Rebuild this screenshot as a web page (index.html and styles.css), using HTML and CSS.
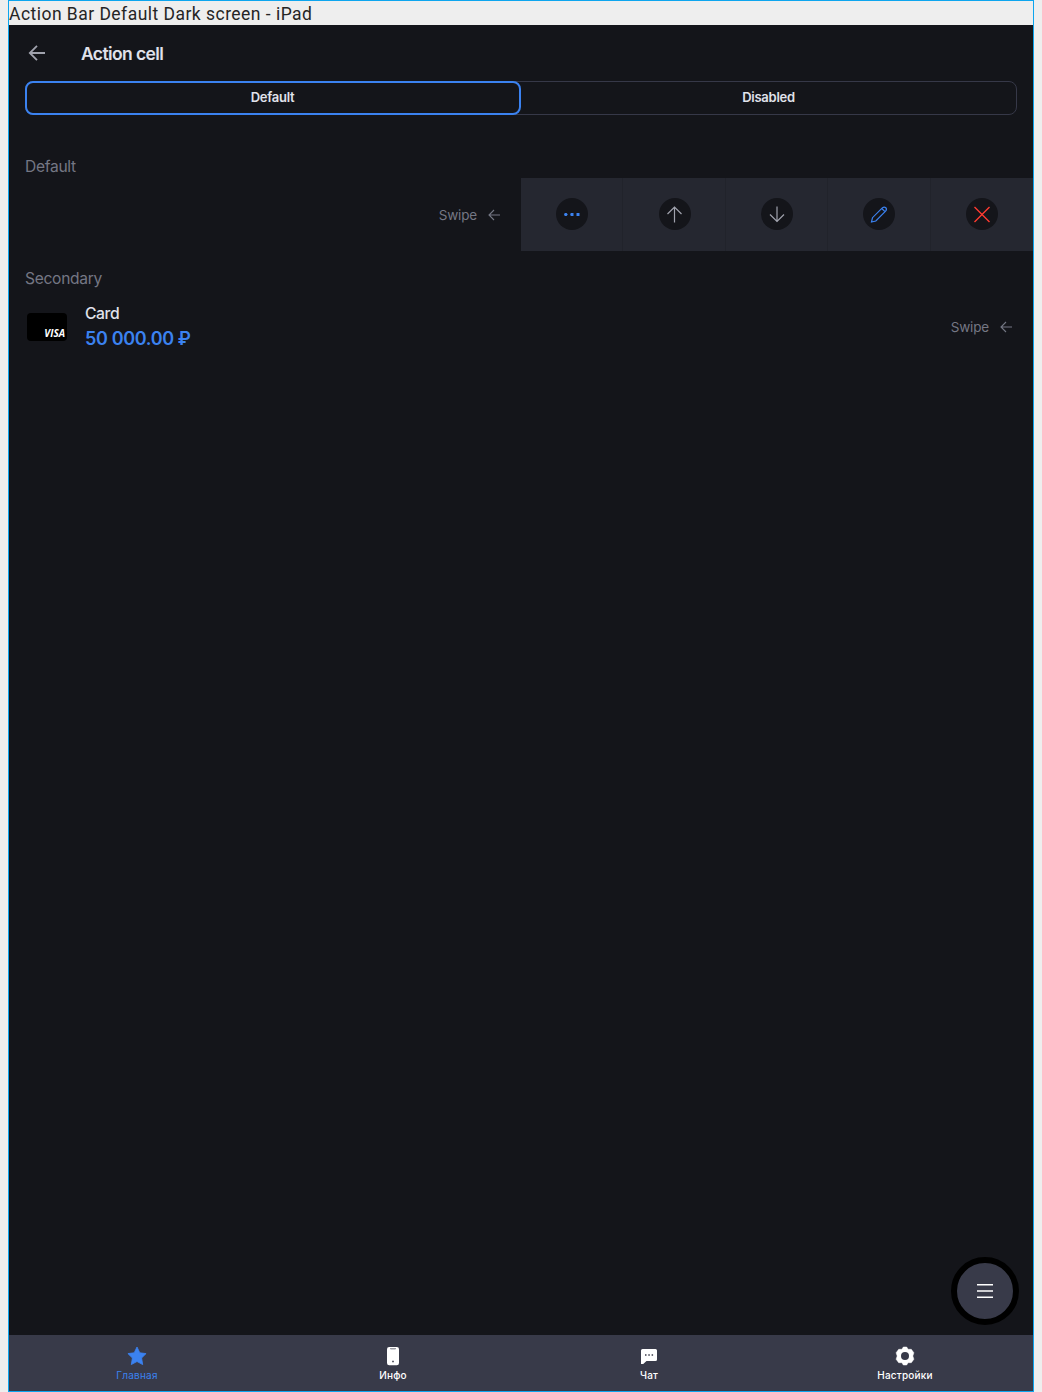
FILE: index.html
```html
<!DOCTYPE html>
<html lang="ru">
<head>
<meta charset="utf-8">
<title>Action cell</title>
<link rel="stylesheet" href="styles.css">
</head>
<body>
<div class="frame">
  <div class="frame-label"><span>Action Bar Default Dark screen - iPad</span></div>
  <main class="app">
    <header class="header">
      <svg class="back" width="18" height="18" viewBox="0 0 18 18"><path d="M17 9H2M9 1.8 1.8 9 9 16.2"/></svg>
      <h1 class="title">Action cell</h1>
    </header>
    <div class="segments">
      <button class="segment active"><span>Default</span></button>
      <button class="segment"><span>Disabled</span></button>
    </div>
    <h2 class="section first">Default</h2>
    <div class="swipe-row">
      <div class="swipe-front">
        <span class="swipe">Swipe</span>
        <svg class="swipe-arrow" width="12" height="12" viewBox="0 0 12 12"><path d="M12 6H1M6 1 1 6l5 5"/></svg>
      </div>
      <div class="action"><i class="circle"><svg class="blue-fill" width="18" height="18" viewBox="0 0 18 18"><path d="M1 9.500l.8-1.500h1.800L4.800 9.500l-1.200 1.500H1.800zM7.200 9.500l.6-1.500h2.700v3H7.800zM13.500 8h3v3h-3z"/></svg></i></div>
      <div class="action"><i class="circle"><svg width="18" height="18" viewBox="0 0 18 18"><path d="M8.500 17.500V2M1.500 9l7-7 7 7"/></svg></i></div>
      <div class="action"><i class="circle"><svg width="18" height="18" viewBox="0 0 18 18"><path d="M9 1.500V17M2 9.500l7 7 7-7"/></svg></i></div>
      <div class="action"><i class="circle"><svg class="blue" width="18" height="18" viewBox="0 0 18 18"><path d="M1.500 17 2.500 12.700 12.300 2.900Q14.200 1.300 15.800 2.700 17.200 4.300 15.600 6.200L5.800 16ZM11.800 3.500l3.200 3.200"/></svg></i></div>
      <div class="action"><i class="circle"><svg class="red" width="18" height="18" viewBox="0 0 18 18"><path d="m1.500 2 15 15M16.500 2l-15 15"/></svg></i></div>
    </div>
    <h2 class="section">Secondary</h2>
    <div class="card-row">
      <div class="card-art"><span>VISA</span></div>
      <div class="card-text">
        <div class="card-name">Card</div>
        <div class="card-sum">50 000.00 ₽</div>
      </div>
      <span class="swipe">Swipe</span>
      <svg class="swipe-arrow" width="12" height="12" viewBox="0 0 12 12"><path d="M12 6H1M6 1 1 6l5 5"/></svg>
    </div>
    <button class="fab"><svg width="16" height="16" viewBox="0 0 16 16"><path d="M0 1.750h16M0 8h16M0 14.250h16"/></svg></button>
    <nav class="tabs">
      <a class="tab current"><svg width="20" height="20" viewBox="0 0 20 20"><path d="M10 1 12.800 6.800 19.100 7.600 14.600 12 15.700 18.600 10 15.500 4.300 18.600 5.400 12 .9 7.600 7.200 6.800Z" stroke="currentColor" stroke-width=".8" stroke-linejoin="round"/></svg><span>Главная</span></a>
      <a class="tab"><svg width="20" height="20" viewBox="0 0 20 20"><rect x="4" y="1" width="12" height="18.300" rx="2.200"/><path class="cut soft" d="M7 2h6v.7l-.7.8H7.700L7 2.700z"/><path class="cut" d="M9.200 14.700h1.600v1.500H9.200z"/></svg><span>Инфо</span></a>
      <a class="tab"><svg width="20" height="20" viewBox="0 0 20 20"><path d="M3.500 3h13Q18 3 18 4.500v9q0 1.500-1.500 1.500H7.500L4.200 18H2V4.500Q2 3 3.500 3Z"/><path class="cut" d="M6 8.200h1.500v1.500H6zM9.300 8.200h1.500v1.500H9.300zM12.600 8.200h1.500v1.500h-1.500z"/></svg><span>Чат</span></a>
      <a class="tab"><svg width="20" height="20" viewBox="0 0 20 20"><path d="M8.300 1h3.400l1.400 2.300h3.200L18.900 6.800 17.800 10l1.100 3.200-2.600 3.500h-3.200L11.700 19H8.300l-1.400-2.300H3.700L1.100 13.200 2.200 10 1.100 6.800 3.700 3.300h3.200Z" stroke="currentColor" stroke-width=".5" stroke-linejoin="round"/><circle class="cut" cx="10" cy="10" r="4"/></svg><span>Настройки</span></a>
    </nav>
  </main>
</div>
</body>
</html>
```
FILE: styles.css
```css
* { box-sizing: border-box; }
body {
  margin: 0;
  background: #eee;
  font-family: Inter, "Liberation Sans", sans-serif;
}
.frame {
  width: 1026px;
  height: 1392px;
  margin-left: 8px;
  border: 1px solid #0da5ee;
  display: flex;
  flex-direction: column;
}
.frame-label {
  height: 24px;
  font: 17.500px/26px Roboto, sans-serif;
  letter-spacing: .47px;
  color: #252525;
  white-space: nowrap;
}
.app {
  position: relative;
  flex: 1;
  display: flex;
  flex-direction: column;
  background: #14151a;
  color: #e0e2eb;
}
.header {
  height: 56px;
  padding-left: 19px;
  display: flex;
  align-items: center;
  gap: 35px;
}
svg { display: block; flex: none; fill: none; }
.back { stroke: #a0a2ad; stroke-width: 1.8; }
.title {
  margin: 0;
  font-size: 17.500px;
  font-weight: 600;
  line-height: 24px;
  letter-spacing: -.6px;
  padding-top: 2px;
}
.segments {
  height: 34px;
  margin: 0 16px;
  border: 1px solid #363848;
  border-radius: 8px;
  display: flex;
}
.segment {
  flex: 1;
  padding: 0 0 2px;
  border: 0;
  background: none;
  color: inherit;
  font: 600 13px/28px Inter, sans-serif;
  letter-spacing: -.25px;
}
.segment.active {
  flex: 0 0 496px;
  margin: -1px 0 -1px -1px;
  padding-right: 1px;
  border: 2px solid #3b82f0;
  border-radius: 8px;
}
.section {
  height: 24px;
  margin: 15px 16px 0;
  font-size: 15.600px;
  font-weight: 400;
  line-height: 25px;
  color: #747784;
  letter-spacing: -.3px;
}
.section.first { margin-top: 39px; }
.swipe-row {
  height: 73px;
  display: grid;
  grid-template-columns: 512px repeat(5, 1fr);
}
.swipe-front {
  display: flex;
  align-items: center;
  justify-content: flex-end;
  padding: 0 21px 1px 0;
}
.swipe {
  font-size: 13.500px;
  line-height: 20px;
  color: #747784;
  letter-spacing: -.15px;
  padding-top: 2px;
  margin-right: 11px;
}
.swipe-arrow { stroke: #747784; stroke-width: 1.1; margin-top: 2px; }
.action {
  background: #252730;
  box-shadow: inset -1px 0 #21232b;
  padding-bottom: 1px;
  display: flex;
  align-items: center;
  justify-content: center;
}
.action:last-child { box-shadow: none; }
.circle {
  width: 32px;
  height: 32px;
  border-radius: 50%;
  background: #14151a;
  display: flex;
  align-items: center;
  justify-content: center;
}
.circle svg { stroke: #a0a2ad; stroke-width: 1.2; }
.circle .blue { stroke: #3b82f0; }
.circle .red { stroke: #ff3b30; stroke-width: 1.4; }
.circle .blue-fill { stroke: none; fill: #3b82f0; }
.card-row {
  height: 72px;
  padding: 0 21px 1px 18px;
  display: flex;
  align-items: center;
}
.card-art {
  width: 40px;
  height: 28px;
  margin-top: 3px;
  border-radius: 4px;
  background: #000;
  color: #fff;
  display: flex;
  align-items: flex-end;
  justify-content: flex-end;
  padding: 0 2px 2px 0;
  font: italic 700 10px/12px "Open Sans", sans-serif;
  letter-spacing: 0;
}
.card-text { margin-left: 18px; flex: 1; }
.card-name {
  font-size: 15.700px;
  font-weight: 500;
  line-height: 26px;
  letter-spacing: -.4px;
}
.card-sum {
  font-size: 18px;
  font-weight: 600;
  line-height: 23px;
  color: #3b82f0;
  letter-spacing: -.35px;
}
.fab {
  position: absolute;
  right: 14px;
  bottom: 66px;
  width: 68px;
  height: 68px;
  padding: 0;
  border: 6px solid #000;
  border-radius: 50%;
  background: #383a49;
  display: flex;
  align-items: center;
  justify-content: center;
}
.fab svg { stroke: #fff; stroke-width: 1.5; }
.tabs {
  height: 56px;
  margin-top: auto;
  background: #383a49;
  display: grid;
  grid-template-columns: repeat(4, 1fr);
}
.tab {
  display: flex;
  flex-direction: column;
  align-items: center;
  padding-top: 11px;
  color: #fff;
  font-size: 10px;
  font-weight: 500;
  line-height: 14px;
  letter-spacing: .2px;
  gap: 2px;
}
.tab svg { fill: currentColor; }
.tab .cut { fill: #383a49; }
.tab .soft { opacity: .5; }
.tab.current { color: #3b82f0; font-weight: 400; }
```
